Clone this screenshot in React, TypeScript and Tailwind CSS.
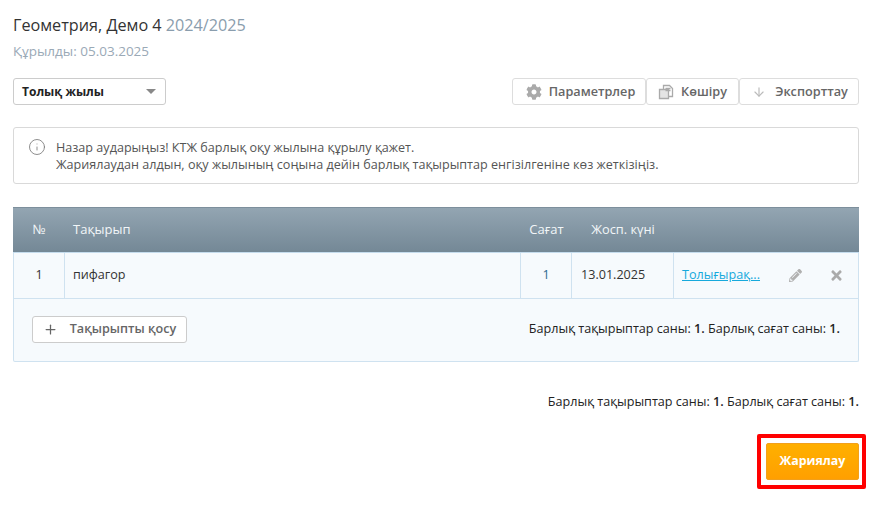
import { Plus, ArrowDown, Info } from 'lucide-react'
import { FaCog, FaPencilAlt, FaTimes } from 'react-icons/fa'

function CopyIcon() {
  return (
    <svg width="16" height="16" viewBox="0 0 16 16" fill="none" stroke="#aaa" strokeWidth="1.3">
      <path d="M5.5 5V1.5h6l3 3v8h-4" fill="#fff" />
      <path d="M1.5 5.5h9v9h-9z" fill="#e4e4e4" />
      <path d="M7.5 4.5h5M7.5 6.5h5" />
    </svg>
  )
}

export default function App() {
  return (
    <div className="w-[877px] h-[516px] bg-white overflow-hidden pl-[13px] pr-[18px] pt-[14px] font-['Open_Sans',sans-serif] text-[13px] text-[#333]">
      <div className="text-[16.2px] leading-[22px] text-[#333]">Геометрия, Демо 4 <span className="text-[#8a9dad]">2024/2025</span></div>
      <div className="mt-[5px] text-[13.5px] leading-[20px] text-[#9aa9b6]">Құрылды: 05.03.2025</div>

      <div className="mt-[17px] flex justify-between h-[27px]">
        <div className="w-[153px] border border-[#ccc] rounded-[3px] flex items-center justify-between pl-2 pr-[9px] font-bold text-[12px] text-[#222]">
          <span>Толық жылы</span>
          <span className="w-0 h-0 border-x-[5px] border-x-transparent border-t-[5px] border-t-[#888]" />
        </div>
        <div className="flex font-semibold text-[12.7px] text-[#666]">
          <button className="w-[134px] border border-[#ddd] rounded-[3px] flex items-center justify-center gap-[7px] pl-[3px]"><FaCog size={16} className="text-[#aaa]" />Параметрлер</button>
          <button className="w-[93px] border border-[#ddd] rounded-[3px] flex items-center justify-center gap-[7px]"><CopyIcon />Көшіру</button>
          <button className="w-[120px] border border-[#ddd] rounded-[3px] flex items-center justify-center gap-[9px] pl-[2px]"><ArrowDown size={14} className="text-[#bbb]" />Экспорттау</button>
        </div>
      </div>

      <div className="mt-[22px] h-[57px] border border-[#d9d9d9] rounded-[3px] flex items-center pl-[14px] text-[12.6px] leading-[17px] text-[#555]">
        <Info size={18} strokeWidth={1.1} className="text-[#777] mr-[10px] mb-[17px]" />
        <div>
          <div>Назар аударыңыз! КТЖ барлық оқу жылына құрылу қажет.</div>
          <div>Жариялаудан алдын, оқу жылының соңына дейін барлық тақырыптар енгізілгеніне көз жеткізіңіз.</div>
        </div>
      </div>

      <div className="mt-[23px] h-[155px] border border-[#cfe2f0] border-t-0 rounded-[2px] bg-[#f6fafd]">
        <div className="h-[46px] -mx-px flex items-center border-t border-[#7d8f9c] border-b border-b-[#c5dced] bg-gradient-to-b from-[#93a5b2] to-[#748896] text-[#f2f6f8]">
          <div className="w-[52px] text-center">№</div>
          <div className="w-[456px] pl-[8px]">Тақырып</div>
          <div className="w-[51px] text-center">Сағат</div>
          <div className="w-[102px] text-center text-[12.8px]">Жосп. күні</div>
        </div>
        <div className="h-[46px] flex border-b border-[#cfe2f0] text-[12.6px]">
          <div className="w-[51px] flex items-center justify-center border-r border-[#cfe2f0] pb-px">1</div>
          <div className="w-[456px] flex items-center pl-2 border-r border-[#cfe2f0] pb-px">пифагор</div>
          <div className="w-[51px] flex items-center justify-center border-r border-[#cfe2f0] text-[#2a6a8f] pb-px">1</div>
          <div className="w-[102px] flex items-center pl-[9px] border-r border-[#cfe2f0] pb-px">13.01.2025</div>
          <div className="flex-1 flex items-center pl-2 pr-[14px] pb-px">
            <a className="text-[12.6px] text-[#17a9dc] underline">Толығырақ...</a>
            <FaPencilAlt size={13} className="text-[#b0b0b0] ml-[29px]" />
            <FaTimes size={15} className="text-[#aaa] ml-auto" />
          </div>
        </div>
        <div className="h-[61px] flex items-center justify-between pl-[18px] pr-[18px]">
          <button className="h-[27px] w-[155px] bg-white border border-[#ccc] rounded-[3px] flex items-center justify-center gap-[12px] font-semibold text-[12.6px] text-[#666]"><Plus size={15} className="text-[#666]" />Тақырыпты қосу</button>
          <div className="text-[12.6px] text-[#222]">Барлық тақырыптар саны: <b className="font-semibold">1.</b> Барлық сағат саны: <b className="font-semibold">1.</b></div>
        </div>
      </div>

      <div className="mt-[31px] text-right text-[12.6px] leading-[17px] text-[#222]">Барлық тақырыптар саны: <b className="font-semibold">1.</b> Барлық сағат саны: <b className="font-semibold">1.</b></div>

      <div className="mt-[24px] flex justify-end -mr-[7px]">
        <div className="w-[109px] h-[55px] border-4 border-[#f00] rounded-[2px] flex items-center justify-end pr-[3px]">
          <button className="w-[93px] h-[37px] rounded-[2px] border border-[#f2a01c] bg-gradient-to-b from-[#ffb000] to-[#ff9f00] text-white font-bold text-[12.4px]">Жариялау</button>
        </div>
      </div>
    </div>
  )
}
